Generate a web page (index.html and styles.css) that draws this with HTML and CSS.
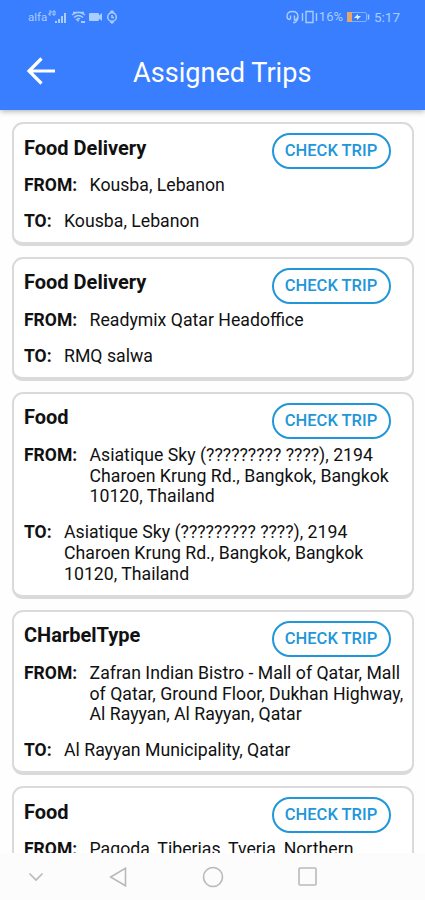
FILE: index.html
```html
<!DOCTYPE html>
<html lang="en">
<head>
    <meta charset="UTF-8">
    <meta name="viewport" content="width=device-width, initial-scale=1.0">
    <title>Assigned Trips</title>
    <link rel="stylesheet" href="styles.css">
</head>
<body>
<div class="app">
    <header class="header">
        <div class="status-bar">
            <div class="status-left">
                <span class="carrier">alfa</span>
                <svg class="signal" width="19" height="14" viewBox="0 0 19 14">
                    <path d="M1 1h2v2H1v2h2M5 1v4M5 1h2v4H5" fill="none" stroke="currentColor" stroke-width="1"/>
                    <path d="M8 13v-2M11 13V9M14 13V6M17 13V3" fill="none" stroke="currentColor" stroke-width="2"/>
                </svg>
                <svg class="wifi" width="15" height="14" viewBox="0 0 15 14">
                    <path d="M1 5Q7.500 -.5 14 5M3 7.500Q7.500 3.500 12 7.500M5 10Q7.500 7.500 9 9M2 2.500h11" fill="none" stroke="currentColor" stroke-width="1.300"/>
                    <path d="M5.500 9.500h3L7 12zM10 11h4v2h-4z" fill="currentColor"/>
                </svg>
                <svg class="camera" width="14" height="10" viewBox="0 0 14 10">
                    <path d="M1 1h8q1 0 1 1v1.500L13 1v8l-3-2.500V8q0 1-1 1H1q-1 0-1-1V2q0-1 1-1z" fill="currentColor"/>
                </svg>
                <svg class="watch" width="12" height="14" viewBox="0 0 12 14">
                    <circle cx="6" cy="7" r="4.300" fill="none" stroke="currentColor" stroke-width="1.500"/>
                    <path d="M4 2.500L6 1l2 1.500M4 11.500L6 13l2-1.500M6 5v2.500h2" fill="none" stroke="currentColor" stroke-width="1.500"/>
                </svg>
            </div>
            <div class="status-right">
                <svg class="headset" width="13" height="14" viewBox="0 0 13 14">
                    <path d="M4 9.500Q1 9.500 1 6.500Q1 1.500 6.500 1.500T12 6.500Q12 10.500 9 12.500H7M4.500 5.500v4M8.500 5.500v4.500q3 0 3-3" fill="none" stroke="currentColor" stroke-width="1.400"/>
                </svg>
                <svg class="vibrate" width="17" height="14" viewBox="0 0 17 14">
                    <path d="M5 1.500h7v11H5zM1.500 3v8M15.500 3v8" fill="none" stroke="currentColor" stroke-width="1.400"/>
                </svg>
                <span class="percent">16%</span>
                <svg class="battery" width="24" height="12" viewBox="0 0 24 12">
                    <rect x="1.500" y="1.500" width="19" height="9" rx="1.500" fill="none" stroke="#7fb0f4"/>
                    <path d="M1 1h5v10H1z" fill="#e6a56b"/>
                    <path d="M8 7l4-4v2h3l-4 4V7z" fill="#d9ebff"/>
                    <path d="M22.500 3.500v5" stroke="currentColor" stroke-width="1.500"/>
                </svg>
                <span class="time">5:17</span>
            </div>
        </div>
        <div class="title-bar">
            <svg class="back" width="30" height="30" viewBox="0 0 30 30">
                <path d="M15.500 2.500L3 15l12.500 12.500M3 15h26" fill="none" stroke="#fff" stroke-width="3.200"/>
            </svg>
            <h1>Assigned Trips</h1>
        </div>
    </header>

    <main class="trips">
        <div class="trip">
            <div class="trip-head">
                <h2>Food Delivery</h2>
                <button class="check">CHECK TRIP</button>
            </div>
            <div class="row"><b>FROM:</b><span>Kousba, Lebanon</span></div>
            <div class="row"><b>TO:</b><span>Kousba, Lebanon</span></div>
        </div>
        <div class="trip">
            <div class="trip-head">
                <h2>Food Delivery</h2>
                <button class="check">CHECK TRIP</button>
            </div>
            <div class="row"><b>FROM:</b><span>Readymix Qatar Headoffice</span></div>
            <div class="row"><b>TO:</b><span>RMQ salwa</span></div>
        </div>
        <div class="trip">
            <div class="trip-head">
                <h2>Food</h2>
                <button class="check">CHECK TRIP</button>
            </div>
            <div class="row"><b>FROM:</b><span>Asiatique Sky (????????? ????), 2194<br>Charoen Krung Rd., Bangkok, Bangkok<br>10120, Thailand</span></div>
            <div class="row"><b>TO:</b><span>Asiatique Sky (????????? ????), 2194<br>Charoen Krung Rd., Bangkok, Bangkok<br>10120, Thailand</span></div>
        </div>
        <div class="trip">
            <div class="trip-head">
                <h2>CHarbelType</h2>
                <button class="check">CHECK TRIP</button>
            </div>
            <div class="row"><b>FROM:</b><span>Zafran Indian Bistro - Mall of Qatar, Mall<br>of Qatar, Ground Floor, Dukhan Highway,<br>Al Rayyan, Al Rayyan, Qatar</span></div>
            <div class="row"><b>TO:</b><span>Al Rayyan Municipality, Qatar</span></div>
        </div>
        <div class="trip">
            <div class="trip-head">
                <h2>Food</h2>
                <button class="check">CHECK TRIP</button>
            </div>
            <div class="row"><b>FROM:</b><span>Pagoda, Tiberias, Tveria, Northern</span></div>
        </div>
    </main>

    <nav class="nav-bar">
        <svg width="16" height="10" viewBox="0 0 16 10"><path d="M1.500 1.500L8 8l6.500-6.500"/></svg>
        <svg class="nav-back" width="18" height="20" viewBox="0 0 18 20"><path d="M16.500 1.200v17.600L1.500 10z"/></svg>
        <svg class="nav-home" width="22" height="22" viewBox="0 0 22 22"><circle cx="11" cy="11" r="9.500"/></svg>
        <svg class="nav-recent" width="19" height="19" viewBox="0 0 19 19"><rect x="1" y="1" width="17" height="17" rx="1"/></svg>
    </nav>
</div>
</body>
</html>
```
FILE: styles.css
```css
*{
    box-sizing: border-box;
}
body{
    margin: 0;
    font-family: Roboto, sans-serif;
    color: #111;
    background: #fefefe;
}
h1, h2{
    margin: 0;
}
.app{
    display: flex;
    flex-direction: column;
    height: 900px;
    overflow: hidden;
}
.header{
    flex: none;
    height: 109.500px;
    background: #397eff;
    box-shadow: 0 1px 6px rgba(0, 0, 0, .35);
}
.status-bar{
    display: flex;
    justify-content: space-between;
    height: 34px;
    padding: 0 25px 0 28px;
    font-size: 13.500px;
    line-height: 34px;
    color: #a9cdff;
}
.status-left, .status-right{
    display: flex;
    align-items: center;
}
.carrier{
    width: 20px;
    font-size: 11.500px;
}
.wifi{
    margin-left: 4px;
}
.camera{
    margin-left: 3px;
}
.watch{
    margin-left: 3px;
}
.headset{
    margin-right: 2px;
}
.percent{
    margin-left: 1px;
    font-size: 13px;
}
.battery{
    margin: 0 4px 0 3px;
}
.title-bar{
    display: flex;
    align-items: center;
    height: 74px;
    padding: 0 26px;
}
.title-bar h1{
    margin: 3px 0 0 77px;
    font-size: 27.100px;
    font-weight: 400;
    line-height: 32px;
    color: #fff;
}
.trips{
    flex: 1;
    min-height: 0;
    overflow: hidden;
    padding: 12.600px 11.500px 0 12px;
}
.trip{
    padding: 10px 0 10px 10px;
    margin-bottom: 11.100px;
    border: 2px solid #dadada;
    border-bottom-width: 4px;
    border-radius: 11px;
    background: #fff;
}
.trip-head{
    display: flex;
    justify-content: space-between;
    height: 41px;
    padding-right: 21px;
}
.trip h2{
    margin-top: 1.500px;
    font-size: 20px;
    font-weight: 700;
    line-height: 24px;
}
.check{
    width: 119px;
    height: 36px;
    margin-top: -1px;
    padding: 0;
    border: 2px solid #2196d9;
    border-radius: 18px;
    background: #fff;
    font: 500 16.500px/32px Roboto, sans-serif;
    color: #2196d9;
}
.row{
    display: flex;
    font-size: 17.700px;
    line-height: 20.750px;
    white-space: nowrap;
}
.row + .row{
    margin-top: 15.300px;
}
.row b{
    margin-right: 12.400px;
    font-size: 17.500px;
}
.nav-bar{
    flex: none;
    display: flex;
    align-items: center;
    height: 47px;
    padding-left: 28px;
    background: #fcfcfc;
}
.nav-bar svg{
    fill: none;
    stroke: #b9b9b9;
    stroke-width: 1.600;
}
.nav-bar .nav-back{
    margin-left: 65px;
}
.nav-bar .nav-home{
    margin-left: 75px;
}
.nav-bar .nav-recent{
    margin-left: 74px;
}
```
